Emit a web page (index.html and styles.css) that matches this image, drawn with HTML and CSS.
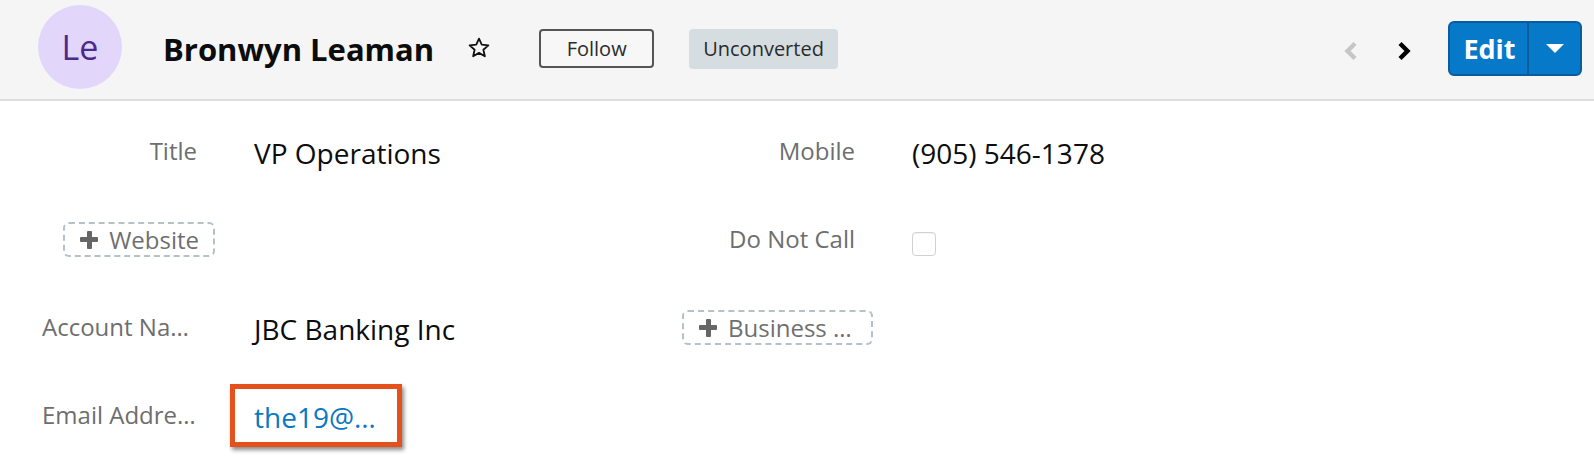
FILE: index.html
```html
<!DOCTYPE html>
<html lang="en">
<head>
<meta charset="utf-8">
<title>Bronwyn Leaman</title>
<link rel="stylesheet" href="styles.css">
</head>
<body>
<header class="record-header">
  <div class="avatar">Le</div>
  <h1 class="record-name">Bronwyn Leaman</h1>
  <span class="star" aria-label="Favorite">
    <svg width="24" height="24" viewBox="0 0 24 24"><path d="M12 2.6l2.75 6.1 6.65.62-5.02 4.43 1.47 6.52L12 16.9l-5.85 3.37 1.47-6.52L2.6 9.32l6.65-.62z" fill="none" stroke="#111" stroke-width="1.8" stroke-linejoin="round"/></svg>
  </span>
  <button class="follow-btn" type="button">Follow</button>
  <span class="status-badge">Unconverted</span>
  <div class="header-actions">
    <span class="nav-arrow nav-prev">
      <svg width="16" height="22" viewBox="0 0 16 22"><polyline points="12,3.5 4.5,11 12,18.5" fill="none" stroke="currentColor" stroke-width="4.4"/></svg>
    </span>
    <span class="nav-arrow nav-next">
      <svg width="16" height="22" viewBox="0 0 16 22"><polyline points="4,3.5 11.5,11 4,18.5" fill="none" stroke="currentColor" stroke-width="4.4"/></svg>
    </span>
    <div class="edit-group">
      <button class="edit-btn" type="button">Edit</button>
      <button class="edit-caret" type="button" aria-label="More actions">
        <svg width="18" height="9" viewBox="0 0 18 9"><polygon points="0,0 18,0 9,9" fill="#fff"/></svg>
      </button>
    </div>
  </div>
</header>

<main class="record-body">
  <div class="field">
    <div class="field-label">Title</div>
    <div class="field-value">VP Operations</div>
  </div>
  <div class="field">
    <div class="field-label">Mobile</div>
    <div class="field-value">(905) 546-1378</div>
  </div>

  <div class="field">
    <div class="field-label field-label-add">
      <button class="add-btn" type="button"><span class="plus"></span><span class="add-text">Website</span></button>
    </div>
  </div>
  <div class="field">
    <div class="field-label">Do Not Call</div>
    <div class="field-value"><span class="checkbox"></span></div>
  </div>

  <div class="field">
    <div class="field-label">Account Name</div>
    <div class="field-value">JBC Banking Inc</div>
  </div>
  <div class="field">
    <div class="field-label field-label-add">
      <button class="add-btn" type="button"><span class="plus"></span><span class="add-text">Business Center</span></button>
    </div>
  </div>

  <div class="field">
    <div class="field-label">Email Address</div>
    <div class="field-value">
      <span class="highlight"><a class="email-link" href="#">the19@example.net</a></span>
    </div>
  </div>
</main>
</body>
</html>
```

FILE: styles.css
```css
*,
*::before,
*::after {
  box-sizing: border-box;
}

html, body {
  margin: 0;
  padding: 0;
  background: #ffffff;
}

body {
  font-family: "Open Sans", "Noto Sans", "Liberation Sans", sans-serif;
  color: #111111;
  width: 1594px;
  height: 460px;
  overflow: hidden;
}

button {
  font-family: inherit;
  cursor: pointer;
}

/* ---------- Header ---------- */
.record-header {
  height: 101px;
  background: #f5f5f5;
  border-bottom: 2px solid #dedede;
  display: flex;
  align-items: center;
  padding: 0 12px 2px 38px;
}

.avatar {
  width: 84px;
  height: 84px;
  border-radius: 50%;
  background: #e3d6fb;
  color: #4a2a8c;
  font-size: 34px;
  display: flex;
  align-items: center;
  justify-content: center;
  flex: none;
  margin-top: -3px;
}

.record-name {
  margin: 0 0 0 41px;
  font-size: 31px;
  font-weight: 700;
  line-height: 40px;
  color: #0c0c0c;
}

.star {
  display: flex;
  margin-left: 33px;
  margin-top: -2px;
}

.follow-btn {
  margin-left: 48px;
  width: 115px;
  height: 39px;
  border: 2px solid #555555;
  border-radius: 4px;
  background: #f7f7f7;
  color: #2b2b2b;
  font-size: 20px;
  line-height: 1;
  padding: 0;
}

.status-badge {
  margin-left: 35px;
  height: 40px;
  padding: 0 14px;
  background: #d6dde1;
  border-radius: 4px;
  color: #2b2b2b;
  font-size: 20px;
  display: flex;
  align-items: center;
}

.header-actions {
  margin-left: auto;
  display: flex;
  align-items: center;
}

.nav-arrow {
  display: flex;
  margin-top: 4px;
}

.nav-prev {
  color: #c6c6c6;
}

.nav-next {
  color: #000000;
  margin-left: 37px;
}

.edit-group {
  display: flex;
  margin-left: 36px;
  height: 55px;
  border: 2px solid #0b5c9c;
  border-radius: 6px;
  background: #0679c9;
  overflow: hidden;
}

.edit-btn {
  border: 0;
  background: transparent;
  color: #ffffff;
  font-size: 27px;
  font-weight: 700;
  padding: 0 11px 0 13px;
  width: 77px;
  height: 100%;
  line-height: 1;
}

.edit-caret {
  border: 0;
  border-left: 2px solid #0b5c9c;
  background: transparent;
  width: 53px;
  height: 100%;
  display: flex;
  align-items: center;
  justify-content: center;
  padding: 0;
}

/* ---------- Body ---------- */
.record-body {
  display: grid;
  grid-template-columns: 658px 658px;
  grid-template-rows: 88px 88px 88px auto;
  padding: 34px 0 0 42px;
}

.field {
  display: flex;
  align-items: flex-start;
}

.field-label {
  width: 173px;
  flex: none;
  padding-right: 18px;
  font-size: 24px;
  line-height: 32px;
  color: #6e6e6e;
  text-align: right;
  white-space: nowrap;
  overflow: hidden;
  text-overflow: ellipsis;
}

.field-label-add {
  padding-right: 0;
  display: flex;
  justify-content: flex-end;
  overflow: visible;
}

.field-value {
  margin-left: 39px;
  font-size: 28px;
  line-height: 36px;
  color: #0d0d0d;
  white-space: nowrap;
}

/* add (empty field) pill */
.add-btn {
  margin-top: -1px;
  height: 35px;
  max-width: 191px;
  display: flex;
  align-items: center;
  padding: 0 14px 0 15px;
  background: #ffffff;
  border: 2px dashed #b6c0c7;
  border-radius: 6px;
  color: #6f6f6f;
  font-size: 24px;
}

.plus {
  position: relative;
  width: 18px;
  height: 18px;
  flex: none;
  margin-right: 11px;
}

.plus::before,
.plus::after {
  content: "";
  position: absolute;
  background: #666666;
  border-radius: 1px;
}

.plus::before {
  left: 0;
  top: 6.5px;
  width: 18px;
  height: 5px;
}

.plus::after {
  left: 6.5px;
  top: 0;
  width: 5px;
  height: 18px;
}

.add-text {
  white-space: nowrap;
  overflow: hidden;
  text-overflow: ellipsis;
  line-height: 30px;
  min-width: 0;
}

.checkbox {
  display: block;
  width: 24px;
  height: 24px;
  margin-top: 9px;
  border: 1px solid #d2d2d2;
  border-radius: 4px;
  background: #ffffff;
  box-shadow: inset 0 1px 1px rgba(0, 0, 0, 0.05);
}

/* highlighted email */
.highlight {
  position: relative;
  display: inline-block;
}

.highlight::after {
  content: "";
  position: absolute;
  left: -24px;
  top: -15px;
  width: 172px;
  height: 63px;
  border: 5px solid #e4511d;
  box-shadow: 2px 3px 4px rgba(0, 0, 0, 0.45);
  pointer-events: none;
}

.email-link {
  display: block;
  width: 124px;
  color: #0a78c2;
  text-decoration: none;
  white-space: nowrap;
  overflow: hidden;
  text-overflow: ellipsis;
}
```
